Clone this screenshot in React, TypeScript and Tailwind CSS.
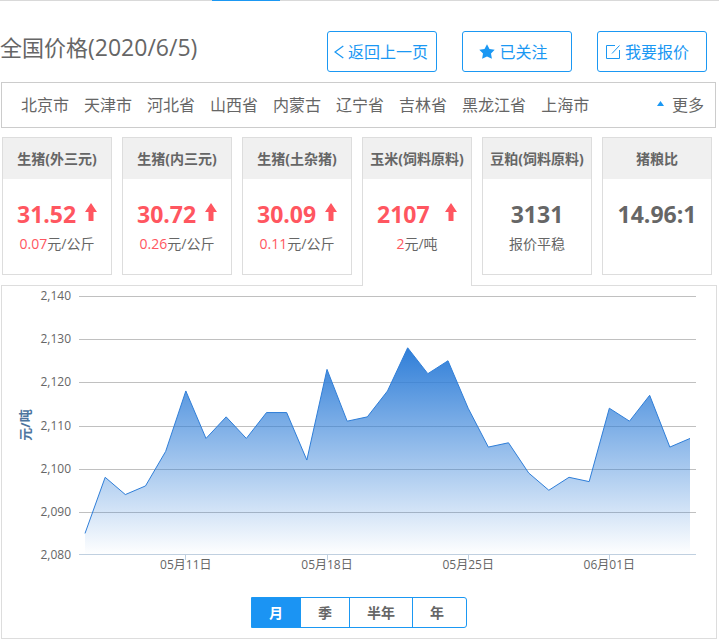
import React, { useState } from 'react';
import clsx from 'clsx';

type Price = {
  name: string;
  value: string;
  rising?: boolean;
  change?: string;
  note?: string;
};

const REGIONS = ['北京市', '天津市', '河北省', '山西省', '内蒙古', '辽宁省', '吉林省', '黑龙江省', '上海市'];

const PRICES: Price[] = [
  { name: '生猪(外三元)', value: '31.52', rising: true, change: '0.07', note: '元/公斤' },
  { name: '生猪(内三元)', value: '30.72', rising: true, change: '0.26', note: '元/公斤' },
  { name: '生猪(土杂猪)', value: '30.09', rising: true, change: '0.11', note: '元/公斤' },
  { name: '玉米(饲料原料)', value: '2107', rising: true, change: '2', note: '元/吨' },
  { name: '豆粕(饲料原料)', value: '3131', note: '报价平稳' },
  { name: '猪粮比', value: '14.96:1' },
];

const SERIES = [
  2085, 2098, 2094, 2096, 2104, 2118, 2107, 2112, 2107, 2113, 2113, 2102, 2123, 2111, 2112, 2118,
  2128, 2122, 2125, 2114, 2105, 2106, 2099, 2095, 2098, 2097, 2114, 2111, 2117, 2105, 2107,
];

const DATE_TICKS = [
  { index: 5, label: '05月11日' },
  { index: 12, label: '05月18日' },
  { index: 19, label: '05月25日' },
  { index: 26, label: '06月01日' },
];

const PERIODS = ['月', '季', '半年', '年'];

export default function App() {
  const [selected, setSelected] = useState(3);
  const [period, setPeriod] = useState('月');

  return (
    <div className="bg-white pb-px font-['Open_Sans','Noto_Sans_CJK_SC',sans-serif] text-[#666]">
      <div className="h-px bg-[#d9d9d9] pl-[212px]">
        <div className="h-px w-17 bg-[#1b98f3]" />
      </div>

      <header className="flex items-start justify-between pt-[30px] pr-3 pb-[10px]">
        <h1 className="text-[22px] leading-8">
          全国价格<span className="text-[23px]">(2020/6/5)</span>
        </h1>
        <div className="flex gap-[25px]">
          <ActionButton label="返回上一页" className="pr-[2px]">
            <svg className="h-4 w-[10px]" viewBox="0 0 10 16" fill="none" stroke="currentColor" strokeWidth="1.3">
              <path d="M9.3 2 1 8l8.300 6" />
            </svg>
          </ActionButton>
          <ActionButton label="已关注" className="pr-[7px]">
            <svg className="h-4 w-4" viewBox="0 0 16 16" fill="currentColor">
              <path d="M8 .3 10.500 4.900 15.700 5.700 12 9.500 12.900 14.700 8 12.600 3.100 14.700 4 9.500.3 5.700 5.500 4.900Z" />
            </svg>
          </ActionButton>
          <ActionButton label="我要报价" className="pr-[10px]">
            <svg className="h-4 w-4" viewBox="0 0 16 16" fill="none" stroke="currentColor">
              <path d="M10 1.500H1.500v13h13V6M7 9.500l7.500-8" />
            </svg>
          </ActionButton>
        </div>
      </header>

      <nav className="mr-[3px] ml-px flex h-[46px] items-center justify-between border border-[#ccc] pr-[11px] pl-[19px] text-base">
        <div className="flex gap-[15px]">
          {REGIONS.map(r => (
            <a key={r} href="#" className="whitespace-nowrap">{r}</a>
          ))}
        </div>
        <button className="flex items-center gap-2">
          <svg className="mb-1 h-[5px] w-[7px] fill-[#1b98f3]" viewBox="0 0 7 5">
            <path d="M3.500 0 7 5H0Z" />
          </svg>
          更多
        </button>
      </nav>

      <div className="mt-[9px] grid grid-cols-6 gap-[10px] pr-[7px] pl-[2px]">
        {PRICES.map((p, i) => (
          <PriceCard key={p.name} price={p} active={i === selected} onSelect={() => setSelected(i)} />
        ))}
      </div>

      <section className="mt-[10px] mr-[2px] ml-px border border-[#ddd] pb-[10px]">
        <TrendChart />
        <div className="mt-[11px] flex justify-center">
          <div className="flex h-[31px] overflow-hidden rounded-r-[3px] border border-[#1b98f3] text-sm font-bold">
            {PERIODS.map(p => (
              <button
                key={p}
                onClick={() => setPeriod(p)}
                className={clsx(
                  'border-r border-[#1b98f3] px-[17px] last:border-r-0 last:pr-[22px]',
                  p === period && 'bg-[#1b94f3] text-white',
                )}
              >
                {p}
              </button>
            ))}
          </div>
        </div>
      </section>
    </div>
  );
}

type ActionButtonProps = { label: string; className?: string; children: React.ReactNode };

function ActionButton({ label, className, children }: ActionButtonProps) {
  return (
    <button
      className={clsx(
        'flex h-[41px] w-[110px] items-center justify-center gap-1 rounded-[3px] border border-[#1b98f3] text-base whitespace-nowrap text-[#1b98f3]',
        className,
      )}
    >
      {children}
      {label}
    </button>
  );
}

function PriceCard({ price, active, onSelect }: { price: Price; active: boolean; onSelect: () => void }) {
  return (
    <button
      onClick={onSelect}
      className={clsx(
        'flex flex-col items-stretch border border-[#ddd] bg-white text-center',
        // the open card runs into the chart panel below
        active ? 'relative z-10 -mb-[11px] h-[149px] border-b-0' : 'h-[138px]',
      )}
    >
      <span className="block h-[41px] bg-[#f0f0f0] text-sm leading-[42px] font-bold whitespace-nowrap">{price.name}</span>
      <span
        className={clsx(
          'mt-[19px] flex items-center justify-center gap-2 text-[23px] leading-8 font-bold',
          price.rising && 'text-[#ff5660]',
        )}
      >
        <span className={clsx('text-left', price.rising && 'min-w-[60px]')}>{price.value}</span>
        {price.rising && (
          <svg className="mb-1 h-[18px] w-3" viewBox="0 0 12 18" fill="currentColor">
            <path d="M6 0 12 9H8.500v9h-5V9H0Z" />
          </svg>
        )}
      </span>
      <span className="mt-1 block text-sm leading-5">
        {price.change && <span className="text-[#ff5660]">{price.change}</span>}
        {price.note}
      </span>
    </button>
  );
}

// plot area, in viewBox units
const LEFT = 77;
const RIGHT = 694;
const TOP = 10;
const BOTTOM = 269;

const xAt = (i: number) => 83 + (i * 605) / (SERIES.length - 1);
const yAt = (v: number) => BOTTOM - ((v - 2080) * (BOTTOM - TOP)) / 60;

function TrendChart() {
  const line = SERIES.map((v, i) => `${xAt(i)},${yAt(v)}`).join(' L');
  const levels = [2090, 2100, 2110, 2120, 2130, 2140];

  return (
    <svg className="block h-auto w-full" viewBox="0 0 714 300" role="img" aria-label="元/吨">
      <defs>
        <linearGradient id="trend" x1="0" y1="0" x2="0" y2="1">
          <stop offset="0" stopColor="#2f7ed8" />
          <stop offset="1" stopColor="#2f7ed8" stopOpacity="0" />
        </linearGradient>
      </defs>

      {levels.map(v => (
        <path key={v} d={`M${LEFT} ${Math.round(yAt(v)) + 0.5}H${RIGHT}`} stroke="#c0c0c0" />
      ))}
      {[2080, ...levels].map(v => (
        <text key={v} x="69" y={yAt(v) + 4} textAnchor="end" fontSize="12" fill="#666">
          {v.toLocaleString('en-US')}
        </text>
      ))}

      <path d={`M${xAt(0)},${BOTTOM} L${line} L${xAt(SERIES.length - 1)},${BOTTOM}Z`} fill="url(#trend)" />
      <path d={`M${line}`} fill="none" stroke="#2f7ed8" />

      <path d={`M${LEFT} ${BOTTOM - 0.5}H${RIGHT}`} stroke="#c0d0e0" />
      {DATE_TICKS.map(t => (
        <g key={t.label}>
          <path d={`M${Math.floor(xAt(t.index)) + 0.5} ${BOTTOM}v5`} stroke="#c0d0e0" />
          <text x={xAt(t.index)} y="283" textAnchor="middle" fontSize="12" fill="#666">{t.label}</text>
        </g>
      ))}

      <text transform="translate(28 139) rotate(-90)" textAnchor="middle" fontSize="13" fontWeight="bold" fill="#4d759e">
        元/吨
      </text>
    </svg>
  );
}
